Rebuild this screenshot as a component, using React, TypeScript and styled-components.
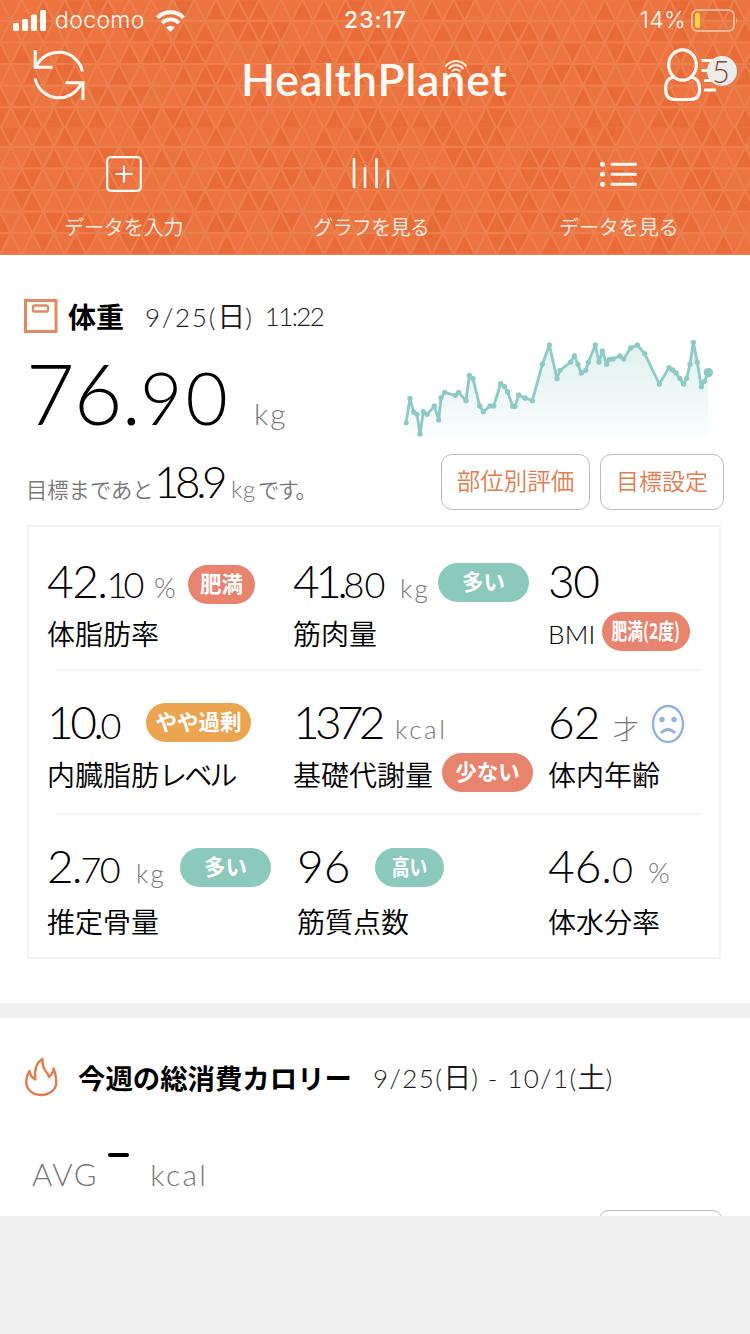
import React from "react";
import styled, { createGlobalStyle } from "styled-components";

const GlobalStyle = createGlobalStyle`
  *, *::before, *::after { box-sizing: border-box; }
  html, body { margin: 0; background: #f0f0f0; }
  body { font-family: Lato, "Noto Sans CJK JP", sans-serif; color: #0a0a0a; }
  svg { display: block; flex: none; }
`;

const orange = "#e27b4e";
const tones = { red: "#e8836e", green: "#8ac9bb", amber: "#eba450" };
type Tone = keyof typeof tones;

const Screen = styled.div`
  width: 750px;
  height: 1334px;
  overflow: hidden;
  background: #f0f0f0;
`;

/* ---------- patterned header ---------- */

const Panel = styled.div<{ $h: number }>`
  position: relative;
  height: ${(p) => p.$h}px;
  overflow: hidden;
  background: #eb7440;
  color: #fffaf4;
`;
const PatternSvg = styled.svg`
  position: absolute;
  inset: 0;
`;
const PanelContent = styled.div`
  position: relative;
  height: 100%;
`;

const STEP = 21.6;
function TrianglePattern({ offset, seed }: { offset: number; seed: number }) {
  let s = seed;
  const rand = () => {
    s = (s * 16807) % 2147483647;
    return s / 2147483647;
  };
  let dark = "";
  let lines = "";
  for (let r = 0; r < 7; r++) {
    const y = offset + r * STEP;
    const shift = r % 2 ? STEP / 2 : 0;
    lines += `M0 ${y}H750`;
    for (let c = -1; c < 36; c++) {
      const x = c * STEP + shift;
      lines += `M${x} ${y}l${STEP / 2} ${STEP}l${STEP / 2} ${-STEP}`;
      if (rand() < 0.3) dark += `M${x} ${y}h${STEP}l${-STEP / 2} ${STEP}z`;
      if (rand() < 0.5) dark += `M${x} ${y}l${STEP / 2} ${STEP}h${-STEP}z`;
    }
  }
  return (
    <PatternSvg width="750" height="130">
      <path d={dark} fill="#e96b37" />
      <path d={lines} fill="none" stroke="#ed7f4e" strokeWidth="2.2" />
    </PatternSvg>
  );
}

const StatusBar = styled.div`
  display: grid;
  grid-template-columns: 1fr auto 1fr;
  align-items: center;
  height: 41px;
  padding: 0 12px 0 13px;
  font: 400 23px/41px Inter, sans-serif;
`;
const StatusSide = styled.div<{ $end?: boolean }>`
  display: flex;
  align-items: center;
  justify-content: ${(p) => (p.$end ? "flex-end" : "flex-start")};
`;
const Carrier = styled.span`
  margin: 0 11px 0 9px;
  font-weight: 300;
  letter-spacing: 0.35px;
`;
const Clock = styled.span`
  font-weight: 550;
  letter-spacing: 0.9px;
`;
const BatteryLevel = styled.span`
  margin-right: 5px;
  font-weight: 350;
  letter-spacing: 0.4px;
`;

const TitleBar = styled.div`
  display: flex;
  height: 87px;
  padding: 7px 13px 0 32px;
`;
const Brand = styled.div`
  position: relative;
  margin-left: 155px;
  font: 600 44.5px/62px Lato, sans-serif;
  letter-spacing: 0.9px;
`;
const BrandWaves = styled.svg`
  position: absolute;
  left: 203px;
  top: 12px;
`;
const Profile = styled.div`
  position: relative;
  width: 74px;
  margin-left: auto;
`;
const CountBadge = styled.span`
  position: absolute;
  left: 44px;
  top: 8px;
  width: 30px;
  height: 30px;
  border-radius: 50%;
  background: #ececec;
  color: #8a4a30;
  font: 300 31px/30px Lato, sans-serif;
  text-align: center;
  padding-right: 2px;
`;

const Nav = styled.nav`
  display: grid;
  grid-template-columns: repeat(3, 247.5px);
  height: 100%;
`;
const NavItem = styled.div`
  display: flex;
  flex-direction: column;
  align-items: center;
  padding-top: 28px;
`;
const NavIcon = styled.div`
  height: 37px;
`;
const NavLabel = styled.span<{ $ls?: number }>`
  margin-top: 18px;
  font: 350 20px/32px "Noto Sans CJK JP", sans-serif;
  letter-spacing: ${(p) => p.$ls ?? -0.1}px;
  opacity: 0.95;
`;

/* ---------- shared pieces ---------- */

const Section = styled.section<{ $h: number; $pt: number }>`
  height: ${(p) => p.$h}px;
  padding: ${(p) => p.$pt}px 24px 0;
  overflow: hidden;
  background: #fff;
`;
const Gap = styled.div`
  height: 15px;
  background: #f0f0f0;
`;
const SectionHead = styled.header`
  display: flex;
  align-items: center;
  height: 40px;
`;
const Heading = styled.h2<{ $w: number; $size: number }>`
  width: ${(p) => p.$w}px;
  margin: 0;
  font: 700 ${(p) => p.$size}px/40px "Noto Sans CJK JP", sans-serif;
  color: #000;
  white-space: nowrap;
`;
const DateText = styled.span<{ $ls?: number }>`
  font: 300 26px/40px Lato, "Noto Sans CJK JP", sans-serif;
  letter-spacing: ${(p) => p.$ls ?? 0}px;
  color: #1a1a1a;
  white-space: pre;
`;
const DateKanji = styled.span`
  font-weight: 350;
  font-size: 28px;
  letter-spacing: 0;
`;

const Digits = styled.span<{ $size: number; $w?: number; $ls?: number; $line?: number }>`
  flex: none;
  width: ${(p) => (p.$w ? `${p.$w}px` : "auto")};
  font-weight: 300;
  font-size: ${(p) => p.$size}px;
  line-height: ${(p) => p.$line ?? 50}px;
  letter-spacing: ${(p) => p.$ls ?? 0}px;
  color: #000;
  white-space: nowrap;
`;
const Fraction = styled.span<{ $size: number; $ls?: number }>`
  font-size: ${(p) => p.$size}px;
  letter-spacing: ${(p) => p.$ls ?? 0}px;
`;
const Unit = styled.span<{ $size?: number; $w?: number; $ls?: number }>`
  flex: none;
  width: ${(p) => (p.$w ? `${p.$w}px` : "auto")};
  font-weight: 300;
  font-size: ${(p) => p.$size ?? 26}px;
  line-height: 40px;
  letter-spacing: ${(p) => p.$ls ?? 0}px;
  color: #777;
  white-space: nowrap;
`;

/* ---------- weight summary ---------- */

const Hero = styled.div`
  display: flex;
  justify-content: space-between;
  height: 189px;
`;
const HeroLeft = styled.div`
  width: 330px;
`;
const MainValue = styled.div`
  display: flex;
  align-items: baseline;
  height: 112px;
  padding: 7px 0 0 2px;
`;
const Goal = styled.div`
  display: flex;
  align-items: baseline;
  height: 60px;
  padding: 8px 0 0 2px;
`;
const GoalText = styled.span<{ $w?: number; $ls?: number }>`
  flex: none;
  width: ${(p) => (p.$w ? `${p.$w}px` : "auto")};
  font: 350 21.3px/40px "Noto Sans CJK JP", sans-serif;
  letter-spacing: ${(p) => p.$ls ?? 0}px;
  color: #777;
  white-space: nowrap;
`;
const HeroRight = styled.div`
  display: flex;
  flex-direction: column;
  align-items: flex-end;
  width: 330px;
  padding-right: 2px;
`;
const ChartBox = styled.div`
  height: 118px;
  padding-right: 8px;
`;
const Actions = styled.div`
  display: flex;
  gap: 10px;
`;
const ActionButton = styled.button<{ $w: number; $size: number }>`
  width: ${(p) => p.$w}px;
  height: 56px;
  padding: 0 0 5px;
  border: 1.5px solid #bdbdbd;
  border-radius: 11px;
  background: #fff;
  color: ${orange};
  font: 350 ${(p) => p.$size}px/48px "Noto Sans CJK JP", sans-serif;
  white-space: nowrap;
`;

/* ---------- body metrics table ---------- */

const Metrics = styled.div`
  width: 694px;
  height: 434px;
  margin-left: 3px;
  border: 2px solid #f3f3f3;
`;
const MetricRow = styled.div<{ $h: number; $pt: number }>`
  display: grid;
  grid-template-columns: 246px 255px 1fr;
  height: ${(p) => p.$h}px;
  padding: ${(p) => p.$pt}px 0 0 18px;
`;
const Divider = styled.div`
  height: 2px;
  margin: 0 17px 0 28px;
  background: #f5f5f5;
`;
const Cell = styled.div<{ $x?: number }>`
  padding-left: ${(p) => p.$x ?? 0}px;
`;
const ValueLine = styled.div<{ $h?: number }>`
  display: flex;
  align-items: baseline;
  height: ${(p) => p.$h ?? 57}px;
`;
const LabelLine = styled.div`
  display: flex;
  align-items: flex-start;
  height: 40px;
`;
const Label = styled.span<{ $w?: number }>`
  flex: none;
  width: ${(p) => (p.$w ? `${p.$w}px` : "auto")};
  font: 350 28px/40px "Noto Sans CJK JP", sans-serif;
  color: #000;
  white-space: nowrap;
`;
const LatinLabel = styled(Label)`
  font: 300 26px/42px Lato, sans-serif;
  letter-spacing: 0.2px;
`;
const Kana = styled.span`
  letter-spacing: -2.8px;
`;
const PillBox = styled.span<{ $tone: Tone; $w: number; $mt: number }>`
  display: flex;
  align-self: flex-start;
  justify-content: center;
  flex: none;
  width: ${(p) => p.$w}px;
  height: 39px;
  margin-top: ${(p) => p.$mt}px;
  border-radius: 20px;
  background: ${(p) => tones[p.$tone]};
  color: #fff;
`;
const PillText = styled.span<{ $squeeze?: number }>`
  font: 700 21.5px/35px "Noto Sans CJK JP", sans-serif;
  white-space: nowrap;
  transform: scaleX(${(p) => p.$squeeze ?? 1});
`;
const MoodIcon = styled.div`
  align-self: flex-start;
  margin-top: 7px;
`;

function Pill(props: { tone: Tone; w: number; mt?: number; squeeze?: number; children: React.ReactNode }) {
  return (
    <PillBox $tone={props.tone} $w={props.w} $mt={props.mt ?? 0}>
      <PillText $squeeze={props.squeeze}>{props.children}</PillText>
    </PillBox>
  );
}

/* ---------- calories ---------- */

const AverageLine = styled.div`
  display: flex;
  align-items: baseline;
  height: 112px;
  padding: 57px 0 0 8px;
`;
const EmptyValue = styled.span`
  width: 21px;
  height: 4px;
  margin: 0 21px 0 10px;
  border-radius: 2px;
  background: #000;
  transform: translateY(-29px);
`;
const ClippedButton = styled.div`
  width: 125px;
  height: 56px;
  margin: 1px 3px 0 auto;
  border: 1.5px solid #bdbdbd;
  border-radius: 11px;
`;

/* ---------- chart ---------- */

const points: [number, number][] = [
  [48, 308], [60, 235], [71, 276], [81, 283], [90, 342], [100, 275], [111, 283], [133, 258], [146, 300],
  [153, 234], [164, 217], [196, 226], [206, 217], [228, 242], [238, 166], [249, 176], [269, 258], [280, 275],
  [300, 258], [311, 258], [332, 191], [344, 200], [353, 216], [368, 259], [375, 259], [386, 225], [405, 234],
  [427, 242], [457, 133], [478, 75], [501, 176], [510, 151], [542, 126], [553, 108], [564, 133], [574, 159],
  [587, 151], [595, 127], [616, 75], [627, 126], [637, 93], [650, 133], [658, 118], [669, 117], [690, 108],
  [701, 117], [722, 84], [742, 75], [764, 101], [808, 192], [837, 143], [848, 150], [858, 159], [869, 175],
  [881, 192], [890, 175], [900, 133], [910, 67], [922, 127], [934, 200], [943, 184], [955, 158],
];

function WeightChart() {
  const line = points.map((p) => p.join(",")).join(" ");
  return (
    <svg width="312" height="104" viewBox="42 48 936 312">
      <defs>
        <linearGradient id="area" x1="0" y1="0" x2="0" y2="1">
          <stop offset="0" stopColor="#dff1ef" />
          <stop offset="1" stopColor="#fafdfd" />
        </linearGradient>
      </defs>
      <polygon points={`48,348 ${line} 955,348`} fill="url(#area)" />
      <polyline points={line} fill="none" stroke="#8dcac5" strokeWidth="8.5" strokeLinejoin="round" />
      {points.map(([x, y], i) => (
        <circle key={i} cx={x} cy={y} r={i === points.length - 1 ? 14 : 8} fill="#8dcac5" />
      ))}
    </svg>
  );
}

export default function App() {
  return (
    <>
      <GlobalStyle />
      <Screen>
        <Panel $h={128}>
          <TrianglePattern offset={-0.8} seed={71} />
          <PanelContent>
            <StatusBar>
              <StatusSide>
                <svg width="33" height="21" viewBox="0 0 33 21" fill="#fffaf4">
                  <rect x="0" y="13" width="6" height="8" rx="1.5" />
                  <rect x="9" y="9" width="6" height="12" rx="1.5" />
                  <rect x="18" y="4.5" width="6" height="16.5" rx="1.5" />
                  <rect x="27" y="0" width="6" height="21" rx="1.5" />
                </svg>
                <Carrier>docomo</Carrier>
                <svg width="29" height="22" viewBox="0 0 29 22" fill="none" stroke="#fffaf4" strokeWidth="3.8">
                  <path d="M1.5 7.6a18.5 18.5 0 0 1 26 0" />
                  <path d="M6 13a12 12 0 0 1 17 0" />
                  <path d="M14.5 22l-4.3-4.6a6.3 6.3 0 0 1 8.6 0z" fill="#fffaf4" stroke="none" />
                </svg>
              </StatusSide>
              <Clock>23:17</Clock>
              <StatusSide $end>
                <BatteryLevel>14%</BatteryLevel>
                <svg width="47" height="23" viewBox="0 0 47 23">
                  <rect x="1" y="1" width="42" height="21" rx="5.5" fill="none" stroke="#f6b797" strokeWidth="2" />
                  <rect x="4" y="4" width="5" height="15" rx="2" fill="#f8d34a" />
                  <path d="M45 8q2.2 3.5 0 7z" fill="#f6b797" />
                </svg>
              </StatusSide>
            </StatusBar>
            <TitleBar>
              <svg width="54" height="54" viewBox="0 0 54 54" fill="none" stroke="#fffaf4" strokeWidth="3">
                <path d="M50.5 23.5A24.5 24.5 0 0 0 4.5 18" />
                <path d="M3.2 2v17.3H20.5" />
                <path d="M3 30.5A24.5 24.5 0 0 0 49 36" />
                <path d="M33.5 34.8H51V52" />
              </svg>
              <Brand>
                HealthPlanet
                <BrandWaves width="24" height="14" viewBox="0 0 24 14" fill="none" stroke="#fffaf4" strokeWidth="1.8">
                  <path d="M1.5 6.5a13 13 0 0 1 21 0" />
                  <path d="M4.7 9a9 9 0 0 1 14.6 0" />
                  <path d="M8 11.4a5 5 0 0 1 8 0" />
                </BrandWaves>
              </Brand>
              <Profile>
                <svg width="74" height="56" viewBox="0 0 74 56" fill="none" stroke="#fffaf4" strokeWidth="3.2">
                  <ellipse cx="19.5" cy="17" rx="13.8" ry="15.2" />
                  <path d="M10.5 29C4.5 30 2.6 35 2.6 41q0 10.5 9 10.5h16q9 0 9-10.5c0-6-2.5-11-8.6-12" />
                  <path d="M38.5 12.5H52M38.5 22.5H50M41 32.5H52M41 42H53" />
                </svg>
                <CountBadge>5</CountBadge>
              </Profile>
            </TitleBar>
          </PanelContent>
        </Panel>
        <Panel $h={127}>
          <TrianglePattern offset={-2.8} seed={977} />
          <PanelContent>
            <Nav>
              <NavItem>
                <NavIcon>
                  <svg width="36" height="36" viewBox="0 0 36 36" fill="none" stroke="#fffaf4" strokeWidth="2.2">
                    <rect x="1.2" y="1.2" width="33.6" height="33.6" rx="3.5" />
                    <path d="M18 10.5v15M10.5 18h15" strokeLinecap="round" />
                  </svg>
                </NavIcon>
                <NavLabel>データを入力</NavLabel>
              </NavItem>
              <NavItem>
                <NavIcon>
                  <svg width="38" height="36" viewBox="0 0 38 36" fill="none" stroke="#fffaf4" strokeWidth="2.6" strokeLinecap="round">
                    <path d="M2 3v28M13 12v19M24.5 3v28M36 15v16" />
                  </svg>
                </NavIcon>
                <NavLabel $ls={-0.7}>グラフを見る</NavLabel>
              </NavItem>
              <NavItem>
                <NavIcon>
                  <svg width="37" height="36" viewBox="0 0 37 36" fill="none" stroke="#fffaf4" strokeWidth="3" strokeLinecap="round">
                    <path d="M12 8.2h23.5M12 18.2h23.5M12 28.2h23.5" />
                    <path d="M2.5 8.2h.01M2.5 18.2h.01M2.5 28.2h.01" strokeWidth="5" />
                  </svg>
                </NavIcon>
                <NavLabel>データを見る</NavLabel>
              </NavItem>
            </Nav>
          </PanelContent>
        </Panel>

        <Section $h={748} $pt={41}>
          <SectionHead>
            <svg width="44" height="34" viewBox="0 0 44 34" fill="none" stroke="#e08a62">
              <rect x="1.5" y="1.5" width="30.5" height="31" strokeWidth="3" />
              <rect x="9" y="6.5" width="15" height="6" rx="1.5" strokeWidth="2.4" />
            </svg>
            <Heading $w={77} $size={28}>体重</Heading>
            <DateText $ls={1.8}>9/25(<DateKanji>日</DateKanji>)</DateText>
            <DateText $ls={-1.6}>{"  11:22"}</DateText>
          </SectionHead>
          <Hero>
            <HeroLeft>
              <MainValue>
                <Digits $size={84} $w={228} $ls={-1} $line={100}>
                  76.<Fraction $size={73} $ls={3}>90</Fraction>
                </Digits>
                <Unit $size={30} $ls={2}>kg</Unit>
              </MainValue>
              <Goal>
                <GoalText $w={128}>目標まであと</GoalText>
                <Digits $size={44} $w={77} $ls={-4.4}>18.9</Digits>
                <Unit $size={24} $w={27} $ls={0.5}>kg</Unit>
                <GoalText $ls={-1.5}>です。</GoalText>
              </Goal>
            </HeroLeft>
            <HeroRight>
              <ChartBox>
                <WeightChart />
              </ChartBox>
              <Actions>
                <ActionButton $w={149} $size={23.5}>部位別評価</ActionButton>
                <ActionButton $w={124} $size={23}>目標設定</ActionButton>
              </Actions>
            </HeroRight>
          </Hero>
          <Metrics>
            <MetricRow $h={142} $pt={29}>
              <Cell>
                <ValueLine>
                  <Digits $size={46} $w={107} $ls={-1.5}>42.<Fraction $size={36} $ls={-4}>10</Fraction></Digits>
                  <Unit $w={34} $size={28}>%</Unit>
                  <Pill tone="red" w={67} mt={9}>肥満</Pill>
                </ValueLine>
                <LabelLine><Label>体脂肪率</Label></LabelLine>
              </Cell>
              <Cell>
                <ValueLine>
                  <Digits $size={46} $w={107} $ls={-4.5}>41.<Fraction $size={36} $ls={0}>80</Fraction></Digits>
                  <Unit $w={38} $ls={2}>kg</Unit>
                  <Pill tone="green" w={91} mt={7}>多い</Pill>
                </ValueLine>
                <LabelLine><Label>筋肉量</Label></LabelLine>
              </Cell>
              <Cell>
                <ValueLine><Digits $size={46} $ls={-1.5}>30</Digits></ValueLine>
                <LabelLine>
                  <LatinLabel $w={54}>BMI</LatinLabel>
                  <Pill tone="red" w={88} mt={-1} squeeze={0.73}>肥満(2度)</Pill>
                </LabelLine>
              </Cell>
            </MetricRow>
            <Divider />
            <MetricRow $h={142} $pt={26}>
              <Cell>
                <ValueLine>
                  <Digits $size={46} $w={99} $ls={-3.5}>10.<Fraction $size={36}>0</Fraction></Digits>
                  <Pill tone="amber" w={105} mt={6}>やや過剰</Pill>
                </ValueLine>
                <LabelLine><Label>内臓脂肪<Kana>レベル</Kana></Label></LabelLine>
              </Cell>
              <Cell>
                <ValueLine>
                  <Digits $size={46} $w={102} $ls={-4.8}>1372</Digits>
                  <Unit $ls={2.6}>kcal</Unit>
                </ValueLine>
                <LabelLine>
                  <Label $w={149}>基礎代謝量</Label>
                  <Pill tone="red" w={91} mt={-1}>少ない</Pill>
                </LabelLine>
              </Cell>
              <Cell>
                <ValueLine>
                  <Digits $size={46} $w={65} $ls={-1}>62</Digits>
                  <Unit $w={38}>才</Unit>
                  <MoodIcon>
                    <svg width="34" height="40" viewBox="0 0 34 40" fill="none" stroke="#92b3da" strokeWidth="2.4">
                      <ellipse cx="17" cy="20" rx="15" ry="18" />
                      <path d="M10 29q7-7 14 0" strokeWidth="3" />
                      <circle cx="11" cy="15.5" r="2.7" fill="#92b3da" stroke="none" />
                      <circle cx="23" cy="15.5" r="2.7" fill="#92b3da" stroke="none" />
                    </svg>
                  </MoodIcon>
                </ValueLine>
                <LabelLine><Label>体内年齢</Label></LabelLine>
              </Cell>
            </MetricRow>
            <Divider />
            <MetricRow $h={142} $pt={26}>
              <Cell>
                <ValueLine $h={60}>
                  <Digits $size={46} $w={89} $ls={-2}>2.<Fraction $size={36} $ls={-1.5}>70</Fraction></Digits>
                  <Unit $w={44} $ls={2}>kg</Unit>
                  <Pill tone="green" w={91} mt={7}>多い</Pill>
                </ValueLine>
                <LabelLine><Label>推定骨量</Label></LabelLine>
              </Cell>
              <Cell $x={4}>
                <ValueLine $h={60}>
                  <Digits $size={46} $w={78}>96</Digits>
                  <Pill tone="green" w={69} mt={7} squeeze={0.83}>高い</Pill>
                </ValueLine>
                <LabelLine><Label>筋質点数</Label></LabelLine>
              </Cell>
              <Cell>
                <ValueLine $h={60}>
                  <Digits $size={46} $w={100}>46.<Fraction $size={36}>0</Fraction></Digits>
                  <Unit $size={28}>%</Unit>
                </ValueLine>
                <LabelLine><Label>体水分率</Label></LabelLine>
              </Cell>
            </MetricRow>
          </Metrics>
        </Section>
        <Gap />
        <Section $h={198} $pt={39}>
          <SectionHead>
            <svg width="54" height="40" viewBox="0 0 54 40" fill="none" stroke="#e27b4e" strokeWidth="2.4" strokeLinejoin="round">
              <path d="M5.5 14C3 18 2.2 21 2.2 24.5 2.2 33 9 38 17 38s15.300-5 15.300-12.500c0-5-.8-9-2.600-14-.8 4-2.200 6.500-4.600 8.300-.8-2-1.400-3.200-2.600-4.600-3-3.500-4.400-7-4-13.200C13 5 10.200 12 11.300 22.500 8.300 21 6 18 5.500 14z" />
            </svg>
            <Heading $w={295} $size={27.4}>今週の総消費カロリー</Heading>
            <DateText $ls={1.4}>9/25(<DateKanji>日</DateKanji>) - 10/1(<DateKanji>土</DateKanji>)</DateText>
          </SectionHead>
          <AverageLine>
            <Unit $size={31} $ls={1.6}>AVG</Unit>
            <EmptyValue />
            <Unit $size={30} $ls={2.4}>kcal</Unit>
          </AverageLine>
          <ClippedButton />
        </Section>
      </Screen>
    </>
  );
}
